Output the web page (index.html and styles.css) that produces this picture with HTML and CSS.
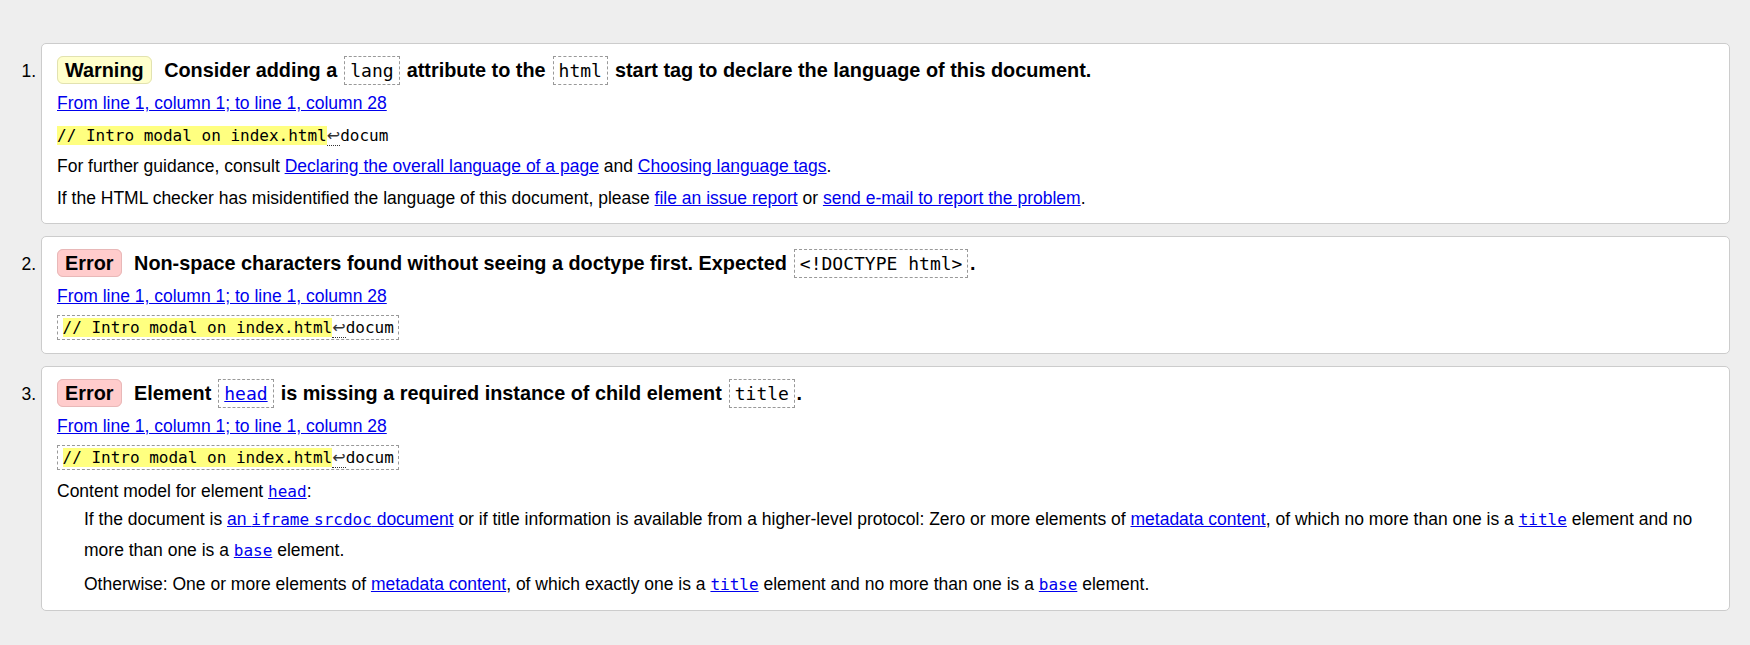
FILE: index.html
```html
<!DOCTYPE html>
<html lang="en">
<head>
<meta charset="utf-8">
<title>Validation messages</title>
<link rel="stylesheet" href="styles.css">
</head>
<body>
<ol class="messages">
  <li class="msg">
    <p class="msg-title"><span class="badge badge-warning">Warning</span> <span>Consider adding a <code class="tcode">lang</code> attribute to the <code class="tcode">html</code> start tag to declare the language of this document.</span></p>
    <p><a href="#">From line 1, column 1; to line 1, column 28</a></p>
    <p><code class="extract"><mark>// Intro modal on index.html</mark><span class="lf">↩</span>docum</code></p>
    <p>For further guidance, consult <a href="#">Declaring the overall language of a page</a> and <a href="#">Choosing language tags</a>.</p>
    <p>If the HTML checker has misidentified the language of this document, please <a href="#">file an issue report</a> or <a href="#">send e-mail to report the problem</a>.</p>
  </li>
  <li class="msg">
    <p class="msg-title"><span class="badge badge-error">Error</span> <span>Non-space characters found without seeing a doctype first. Expected <code class="tcode">&lt;!DOCTYPE html&gt;</code>.</span></p>
    <p><a href="#">From line 1, column 1; to line 1, column 28</a></p>
    <p><code class="extract boxed"><mark>// Intro modal on index.html</mark><span class="lf">↩</span>docum</code></p>
  </li>
  <li class="msg">
    <p class="msg-title"><span class="badge badge-error">Error</span> <span>Element <code class="tcode"><a href="#">head</a></code> is missing a required instance of child element <code class="tcode">title</code>.</span></p>
    <p><a href="#">From line 1, column 1; to line 1, column 28</a></p>
    <p><code class="extract boxed"><mark>// Intro modal on index.html</mark><span class="lf">↩</span>docum</code></p>
    <dl class="model">
      <dt>Content model for element <a href="#"><code>head</code></a>:</dt>
      <dd>
        <p>If the document is <a href="#">an <code>iframe</code> <code>srcdoc</code> document</a> or if title information is available from a higher-level protocol: Zero or more elements of <a href="#">metadata content</a>, of which no more than one is a <a href="#"><code>title</code></a> element and no more than one is a <a href="#"><code>base</code></a> element.</p>
        <p class="next">Otherwise: One or more elements of <a href="#">metadata content</a>, of which exactly one is a <a href="#"><code>title</code></a> element and no more than one is a <a href="#"><code>base</code></a> element.</p>
      </dd>
    </dl>
  </li>
</ol>
</body>
</html>
```

FILE: styles.css
```css
html {
  background: #eeeeee;
}

body {
  margin: 0;
  background: #eeeeee;
  color: #000;
  font-family: "Liberation Sans", Arial, sans-serif;
  font-size: 17.5px;
}

a {
  color: #0000ee;
}

code {
  font-family: "DejaVu Sans Mono", monospace;
  font-size: 16px;
}

.messages {
  margin: 43px 0 0;
  padding: 0 20px 0 41px;
  list-style: decimal outside;
}

.msg {
  background: #fff;
  border: 1px solid #cccccc;
  border-radius: 5px;
  padding: 9px 15px;
  margin-bottom: 11.5px;
  line-height: 31.6px;
}

.msg p {
  margin: 0;
}

.msg-title {
  font-size: 19.85px;
  font-weight: bold;
  line-height: 35px;
}

.badge {
  padding: 2px 7px;
  margin-right: 7px;
  border: 1px solid;
  border-radius: 6px;
}

.badge-warning {
  background: #ffffcc;
  border-color: #e2e2b0;
}

.badge-error {
  background: #ffcccc;
  border-color: #e8b8b8;
}

.tcode {
  font-size: 18px;
  font-weight: normal;
  padding: 3px 5px;
  margin: 0 1.5px;
  border: 1px dashed #999;
}

.extract {
  font-size: 16px;
}

.extract.boxed {
  padding: 2px 4.5px;
  border: 1px dashed #999;
}

mark {
  background: #ffff80;
  color: inherit;
}

.lf {
  font-family: "DejaVu Sans", sans-serif;
  color: #333;
  border-bottom: 1px dotted #333;
}

.model {
  margin: 0;
}

.model dt {
  margin-top: 5px;
  line-height: 24px;
}

.model dd {
  margin: 0 0 0 27px;
}

.model .next {
  margin-top: 2.5px;
}
```
